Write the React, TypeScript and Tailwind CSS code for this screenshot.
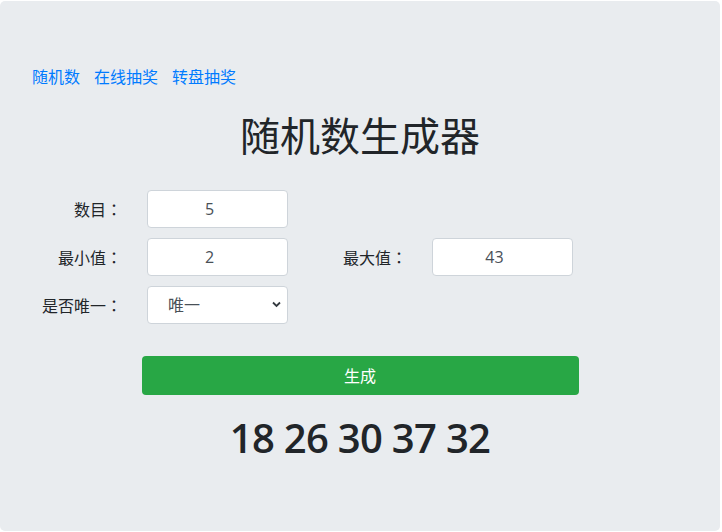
import { useState } from "react";

export default function App() {
  const [count, setCount] = useState("5");
  const [min, setMin] = useState("2");
  const [max, setMax] = useState("43");
  const [unique, setUnique] = useState("唯一");
  const [result, setResult] = useState<number[]>([18, 26, 30, 37, 32]);

  const generate = () => {
    const n = parseInt(count) || 0;
    const lo = parseInt(min) || 0;
    const hi = parseInt(max) || 0;
    const out: number[] = [];
    let guard = 0;
    while (out.length < n && guard < 10000) {
      guard++;
      const v = lo + Math.floor(Math.random() * (hi - lo + 1));
      if (unique === "唯一" && out.includes(v)) continue;
      out.push(v);
    }
    setResult(out);
  };

  const inputCls =
    "w-[141px] h-[38px] rounded-[4px] border border-[#ced4da] bg-white pr-4 text-center text-[16px] text-[#495057] outline-none";

  // full-width colon, centred like the original font
  const colon = <span className="font-['Noto_Sans_CJK_JP',sans-serif]">：</span>;

  return (
    <div className="min-h-screen bg-white font-['Open_Sans','Noto_Sans_CJK_SC',sans-serif] text-[#212529]">
      <div className="mt-px w-[720px] h-[530px] rounded-[5px] bg-[#e9ecef] px-8 pt-16">
        {/* nav links */}
        <div className="flex gap-[14px] text-[16px] leading-6 text-[#007bff]">
          <a href="#">随机数</a>
          <a href="#">在线抽奖</a>
          <a href="#">转盘抽奖</a>
        </div>

        <h1 className="mt-[23px] text-center text-[40px] leading-[48px] font-normal">随机数生成器</h1>

        {/* form */}
        <div className="mt-[30px] flex flex-col gap-[10px] text-[16px]">
          <div className="flex items-center">
            <label className="w-[90px] text-right">数目{colon}</label>
            <input className={inputCls + " ml-[25px]"} value={count} onChange={(e) => setCount(e.target.value)} />
          </div>
          <div className="flex items-center">
            <label className="w-[90px] text-right">最小值{colon}</label>
            <input className={inputCls + " ml-[25px]"} value={min} onChange={(e) => setMin(e.target.value)} />
            <label className="w-[119px] text-right">最大值{colon}</label>
            <input className={inputCls + " ml-[25px]"} value={max} onChange={(e) => setMax(e.target.value)} />
          </div>
          <div className="flex items-center">
            <label className="w-[90px] text-right">是否唯一{colon}</label>
            <div className="relative ml-[25px]">
              <select
                value={unique}
                onChange={(e) => setUnique(e.target.value)}
                className="w-[141px] h-[38px] appearance-none rounded-[4px] border border-[#ced4da] bg-white pl-[20px] text-[16px] text-[#495057] outline-none"
              >
                <option>唯一</option>
                <option>可重复</option>
              </select>
              <svg className="pointer-events-none absolute right-[7px] top-[15px]" width="9" height="7" viewBox="0 0 9 7">
                <path d="M1 1.5 L4.5 5 L8 1.5" fill="none" stroke="#343a40" strokeWidth="1.8" />
              </svg>
            </div>
          </div>
        </div>

        <div className="mt-[32px] flex justify-center">
          <button
            onClick={generate}
            className="w-[437px] h-[39px] rounded-[4px] bg-[#28a745] text-[16px] text-white"
          >
            生成
          </button>
        </div>

        <h1 className="mt-[19px] text-center text-[40px] leading-[48px] font-semibold tracking-[-0.7px]">
          {result.join(" ")}
        </h1>
      </div>
    </div>
  );
}
